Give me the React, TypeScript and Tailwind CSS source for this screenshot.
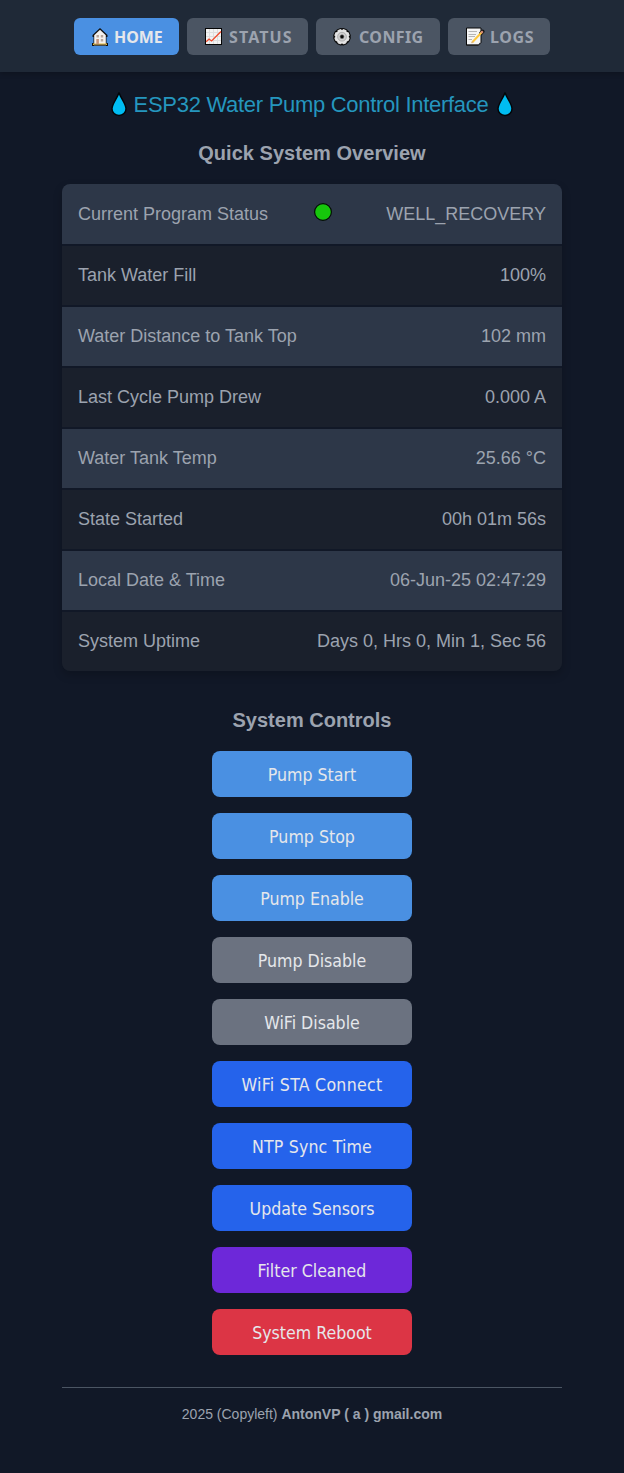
import type { ReactNode } from 'react';

const HouseIcon = () => (
  <svg width="18" height="20" viewBox="0 0 18 20" className="mt-px shrink-0">
    <path d="M9 1 L16.5 8 V10 H15.5 V16 H17 V19 H1 V16 H2.5 V10 H1.5 V8 Z" fill="#111" />
    <path d="M9 2.8 L14.8 8.2 V17 H3.2 V8.2 Z" fill="#f4f1ee" />
    <path d="M2 16.5 H16 V18 H2 Z" fill="#e7b93c" />
    <path d="M3 17.5 H15 V19 H3 Z" fill="#4a4a48" />
    <path d="M5.5 8 h2.4 v2.4 h-2.4z M9.8 8 h2.4 v2.4 h-2.4z M9.8 12 h2.4 v2.4 h-2.4z" fill="#b9a79b" />
    <path d="M5.3 12 h2.6 v5 h-2.6z" fill="#c7957b" />
  </svg>
);

const ChartIcon = () => (
  <svg width="18" height="20" viewBox="0 0 18 20" className="mt-px shrink-0">
    <rect x="0.5" y="1.5" width="16" height="16" fill="#f3f3f3" stroke="#050505" />
    <path d="M4.5 2 V17 M8.5 2 V17 M12.5 2 V17 M1 5.5 H16 M1 9.5 H16 M1 13.5 H16" stroke="#dedede" fill="none" />
    <path d="M1.2 14.8 L4 12 L6.6 14 L16 4.5" fill="none" stroke="#f04a2c" strokeWidth="1.3" />
  </svg>
);

const GearIcon = () => (
  <svg width="18" height="20" viewBox="0 0 18 20" className="mt-px shrink-0">
    {[0, 45, 90, 135].map((a) => (
      <rect key={a} x="5.6" y="1" width="6.8" height="17.4" rx="2" fill="#080808" transform={`rotate(${a + 22.5} 9 9.7)`} />
    ))}
    {[0, 45, 90, 135].map((a) => (
      <rect key={a} x="6.8" y="2" width="4.4" height="15.4" rx="1.2" fill="#dedede" transform={`rotate(${a + 22.5} 9 9.7)`} />
    ))}
    <circle cx="9" cy="9.7" r="6.8" fill="#e4e4e4" />
    <circle cx="9" cy="9.7" r="4.4" fill="#cfcfcf" stroke="#a5a5a5" strokeWidth="0.8" />
    <circle cx="9" cy="9.7" r="1.9" fill="#080808" stroke="#666" strokeWidth="0.6" />
  </svg>
);

const MemoIcon = () => (
  <svg width="19" height="20" viewBox="0 0 19 20" className="mt-px shrink-0">
    <path d="M0.5 1 H15 V15.5 L12.5 18.3 H0.5 Z" fill="#f5f5f5" stroke="#080808" />
    <path d="M2.5 4.5 H11 M2.5 7.5 H10 M2.5 9.5 H9 M2.5 12.5 H6" stroke="#b5b5b5" />
    <path d="M1 17.3 H12.5 L14.5 15 V17 L13 18.3 H1 Z" fill="#36373a" />
    <path d="M15 6.2 L16.6 4.5" stroke="#111" strokeWidth="3.8" strokeLinecap="round" />
    <path d="M6.3 15.3 L16 5" stroke="#ffc83d" strokeWidth="2" />
    <path d="M15 6 L16.8 4.2" stroke="#d98d79" strokeWidth="2.2" />
    <path d="M5.5 16 L7 14.5" stroke="#ddb47b" strokeWidth="1.5" />
  </svg>
);

const Drop = () => (
  <svg width="16" height="26" viewBox="0 0 16 26" className="shrink-0">
    <path d="M8 1.5 C6.8 6.5 1 12.5 1 17.8 A7 6.7 0 0 0 15 17.8 C15 12.5 9.2 6.5 8 1.5 Z" fill="#00bcf2" stroke="#030508" strokeWidth="1.4" />
  </svg>
);

const NavItem = ({ icon, label, box, text }: { icon: ReactNode; label: string; box: string; text: string }) => (
  <a className={`flex h-[37px] items-center rounded-md font-['Noto_Sans',sans-serif] text-base font-bold ${box}`}>
    {icon}
    <span className={`mt-[2px] whitespace-nowrap leading-[37px] ${text}`}>{label}</span>
  </a>
);

const rows = [
  ['Current Program Status', 'WELL_RECOVERY'],
  ['Tank Water Fill', '100%'],
  ['Water Distance to Tank Top', '102 mm'],
  ['Last Cycle Pump Drew', '0.000 A'],
  ['Water Tank Temp', '25.66 °C'],
  ['State Started', '00h 01m 56s'],
  ['Local Date & Time', '06-Jun-25 02:47:29'],
  ['System Uptime', 'Days 0, Hrs 0, Min 1, Sec 56'],
];

const controls = [
  ['Pump Start', 'bg-[#4a90e2]'],
  ['Pump Stop', 'bg-[#4a90e2]'],
  ['Pump Enable', 'bg-[#4a90e2]'],
  ['Pump Disable', 'bg-[#6b7280]'],
  ['WiFi Disable', 'bg-[#6b7280]'],
  ['WiFi STA Connect', 'bg-[#2563eb] tracking-[0.27px]'],
  ['NTP Sync Time', 'bg-[#2563eb] tracking-[0.15px]'],
  ['Update Sensors', 'bg-[#2563eb]'],
  ['Filter Cleaned', 'bg-[#6d28d9]'],
  ['System Reboot', 'bg-[#dc3545]'],
];

export default function App() {
  return (
    <div className="flex h-[1473px] w-full flex-col items-center bg-[#111827] font-['Liberation_Sans',Arial,sans-serif] text-[#9ca3af]">
      <nav className="flex h-[72px] w-full shrink-0 justify-center gap-2 bg-[#1f2937] pt-[18px] shadow-[0_2px_5px_rgba(0,0,0,0.2)]">
        <NavItem icon={<HouseIcon />} label="HOME" box="w-[105px] pl-[17px] bg-[#4a90e2] text-[#e5e7eb]" text="ml-[5px] tracking-[-0.1px]" />
        <NavItem icon={<ChartIcon />} label="STATUS" box="w-[121px] pl-[18px] bg-[#4b5563]" text="ml-[6px] tracking-[1.1px]" />
        <NavItem icon={<GearIcon />} label="CONFIG" box="w-[124px] pl-[17px] bg-[#4b5563]" text="ml-[8px] tracking-[0.4px]" />
        <NavItem icon={<MemoIcon />} label="LOGS" box="w-[102px] pl-[18px] bg-[#4b5563]" text="ml-[5px] tracking-[0.6px]" />
      </nav>

      <main className="flex w-[500px] flex-col items-center">
        <h1 className="mt-[19px] flex h-[26px] items-center whitespace-nowrap text-[22px] leading-[26px] text-[#2596be]">
          <Drop />
          <span className="mt-[2px] mr-[9px] ml-[7px] tracking-[-0.29px]">ESP32 Water Pump Control Interface</span>
          <Drop />
        </h1>
        <h2 className="mt-[24px] text-[20px] font-bold leading-[24px] tracking-[0.03px]">Quick System Overview</h2>

        <dl className="mt-[19px] flex w-full flex-col gap-[2px] overflow-hidden rounded-lg bg-[#111827] text-[18px] shadow-[0_4px_10px_rgba(0,0,0,0.2)]">
          {rows.map(([name, value], i) => (
            <div
              key={name}
              className={`flex items-center justify-between px-4 ${i === 0 ? 'h-[60px]' : 'h-[59px]'} ${i % 2 === 0 ? 'bg-[#2d3748]' : 'bg-[#1a202c]'}`}
            >
              <dt>{name}</dt>
              {i === 0 && (
                <dd className="mr-[8px] mb-[4px]">
                  <svg width="18" height="18" viewBox="0 0 18 18" className="block">
                    <circle cx="9" cy="9" r="8.4" fill="#16c60c" stroke="#050a08" strokeWidth="1.2" />
                  </svg>
                </dd>
              )}
              <dd>{value}</dd>
            </div>
          ))}
        </dl>

        <h2 className="mt-[37px] text-[20px] font-bold leading-[24px]">System Controls</h2>
        <div className="mt-[19px] flex w-[200px] flex-col gap-4">
          {controls.map(([label, color]) => (
            <button
              key={label}
              className={`h-[46px] w-full whitespace-nowrap rounded-lg pt-[3px] font-['DejaVu_Sans_Condensed','DejaVu_Sans',sans-serif] text-[17.6px] [font-stretch:condensed] text-[#e5e7eb] ${color}`}
            >
              {label}
            </button>
          ))}
        </div>

        <footer className="mt-8 w-full border-t border-[#4b5563] pt-[17px] text-center text-[14px] leading-[18px]">
          2025 (Copyleft) <strong>AntonVP ( a ) gmail.com</strong>
        </footer>
      </main>
    </div>
  );
}
